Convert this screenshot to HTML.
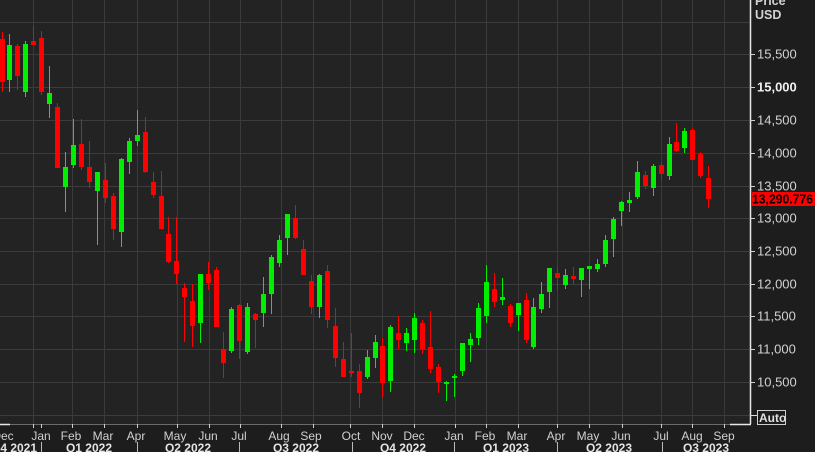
<!DOCTYPE html>
<html><head><meta charset="utf-8"><style>
html,body{margin:0;padding:0;background:#1d1d1d;width:815px;height:452px;overflow:hidden}
svg{display:block;font-family:"Liberation Sans",sans-serif}
</style></head><body>
<svg id="s" width="815" height="452" xmlns="http://www.w3.org/2000/svg">
<rect x="0" y="0" width="815" height="452" fill="#1d1d1d"/>
<rect x="0" y="0" width="750" height="424" fill="#232323"/>
<g id="grid" stroke="#3b3b3b" stroke-width="1"></g>
<g id="candles"></g>
<line x1="750.5" y1="0" x2="750.5" y2="424" stroke="#e8e8e8" stroke-width="1.5"/>
<line x1="0" y1="424.5" x2="750" y2="424.5" stroke="#6a6a6a" stroke-width="1"/>
<line x1="0" y1="424.5" x2="10" y2="424.5" stroke="#e8e8e8" stroke-width="1.5"/>
<line x1="730" y1="424.5" x2="751" y2="424.5" stroke="#e8e8e8" stroke-width="1.5"/>
<g id="ticks" stroke="#cfcfcf" stroke-width="1"></g>
<g fill="#d2d2d2" font-size="13">
<text x="755" y="5" font-weight="bold" font-size="12.5">Price</text>
<text x="755" y="19" font-weight="bold" font-size="12.5">USD</text>
<text x="757" y="58.5">15,500</text>
<text x="757" y="91.5" font-weight="bold" fill="#f0f0f0">15,000</text>
<text x="757" y="124.5">14,500</text>
<text x="757" y="157.5">14,000</text>
<text x="757" y="190.5">13,500</text>
<text x="757" y="222.5">13,000</text>
<text x="757" y="255.5">12,500</text>
<text x="757" y="288.5">12,000</text>
<text x="757" y="320.5">11,500</text>
<text x="757" y="353.5">11,000</text>
<text x="757" y="386.5">10,500</text>
</g>
<rect x="751" y="192" width="64" height="14" fill="#ff0000"/>
<text x="752" y="203.5" font-size="12.5" font-weight="bold" fill="#000" textLength="61" lengthAdjust="spacingAndGlyphs">13,290.776</text>
<line x1="750" y1="415.5" x2="757" y2="415.5" stroke="#ddd"/>
<rect x="757.5" y="410.5" width="28" height="14" fill="#1d1d1d" stroke="#cfcfcf"/>
<text x="759" y="422" font-size="12" font-weight="bold" fill="#e0e0e0">Auto</text>
<g fill="#d0d0d0" font-size="12" text-anchor="middle">
<text x="3" y="440">Dec</text><text x="41" y="440">Jan</text><text x="71" y="440">Feb</text><text x="103" y="440">Mar</text><text x="136" y="440">Apr</text><text x="175" y="440">May</text><text x="208" y="440">Jun</text><text x="239" y="440">Jul</text><text x="279" y="440">Aug</text><text x="311" y="440">Sep</text><text x="351" y="440">Oct</text><text x="382" y="440">Nov</text><text x="414" y="440">Dec</text><text x="454" y="440">Jan</text><text x="485" y="440">Feb</text><text x="517" y="440">Mar</text><text x="556" y="440">Apr</text><text x="588" y="440">May</text><text x="621" y="440">Jun</text><text x="661" y="440">Jul</text><text x="692" y="440">Aug</text><text x="724" y="440">Sep</text>
</g>
<g fill="#e4e4e4" font-size="12" font-weight="bold" text-anchor="middle">
<text x="14" y="452">Q4 2021</text><text x="89" y="452">Q1 2022</text><text x="188" y="452">Q2 2022</text><text x="296" y="452">Q3 2022</text><text x="403" y="452">Q4 2022</text><text x="506" y="452">Q1 2023</text><text x="609" y="452">Q2 2023</text><text x="706" y="452">Q3 2023</text>
</g>
<g stroke="#bbbbbb" stroke-width="1">
<line x1="41.5" y1="442" x2="41.5" y2="452"/><line x1="137.5" y1="442" x2="137.5" y2="452"/><line x1="239.5" y1="442" x2="239.5" y2="452"/><line x1="352.5" y1="442" x2="352.5" y2="452"/><line x1="454.5" y1="442" x2="454.5" y2="452"/><line x1="557.5" y1="442" x2="557.5" y2="452"/><line x1="662.5" y1="442" x2="662.5" y2="452"/>
</g>
</svg>
<script>
var NS="http://www.w3.org/2000/svg";
function el(p,t,a){var e=document.createElementNS(NS,t);for(var k in a)e.setAttribute(k,a[k]);p.appendChild(e);return e;}
var g=document.getElementById('grid');
[22,54,87,120,153,186,218,251,284,316,349,382,415].forEach(function(y){el(g,'line',{x1:0,y1:y+.5,x2:750,y2:y+.5});});
var vx=[33,72,104,137,177,209,240,281,313,350,382,414,455,486,518,557,589,622,661,692,724];
vx.forEach(function(x){el(g,'line',{x1:x+.5,y1:0,x2:x+.5,y2:424});});
var tk=document.getElementById('ticks');
vx.concat([41]).forEach(function(x){el(tk,'line',{x1:x+.5,y1:424,x2:x+.5,y2:428});});
[54,87,120,153,186,218,251,284,316,349,382].forEach(function(y){el(tk,'line',{x1:750,y1:y+.5,x2:755,y2:y+.5});});
var C=[
[2,39,82,32,92,0],[9,45,80,34,92,1],[17,46,76,44,90,0],[25,44,92,41,97,1],[33,41,45,26,45,0],[41,38,92,31,95,0],
[49,93,104,66,118,1],[57,107,168,103,168,0],[65,167,187,152,212,1],[73,145,165,119,168,1],[81,144,167,119,170,0],
[89,167,182,141,188,0],[97,172,191,172,245,1],[105,180,198,163,203,0],[113,196,229,193,240,0],[121,159,232,158,247,1],
[129,141,162,138,174,1],[137,135,141,110,146,1],[145,132,172,117,173,0],[153,182,195,172,198,0],[161,196,229,171,229,0],
[168,234,262,217,263,0],[176,261,274,217,284,0],[184,288,297,283,342,0],[192,301,326,284,347,0],[200,274,323,274,343,1],
[208,274,283,262,290,0],[216,270,327,267,327,0],[223,349,363,332,378,0],[231,309,351,307,353,1],[239,305,341,304,359,0],
[247,307,352,303,354,1],[255,314,320,313,348,0],[263,294,313,277,327,1],[271,257,294,255,314,1],[279,240,263,235,267,1],
[287,214,238,214,255,1],[295,218,238,205,239,0],[303,249,275,240,275,0],[311,281,307,275,314,0],[319,275,307,274,318,1],
[327,271,320,265,328,0],[335,326,358,308,367,0],[343,359,377,342,377,0],[351,371,372,333,377,0],[359,371,393,364,408,0],
[367,357,377,350,379,1],[375,342,358,335,368,1],[382,346,383,338,398,0],[390,327,381,325,392,1],[398,333,340,316,349,0],
[406,333,343,328,351,1],[414,318,340,313,353,1],[422,323,349,320,354,0],[430,347,369,311,373,0],[438,367,382,364,393,0],
[446,382,384,381,401,1],[454,376,378,374,397,1],[462,343,371,343,376,1],[470,339,345,333,362,1],[478,308,338,303,345,1],
[486,282,316,265,323,1],[494,289,302,273,307,0],[502,297,300,278,305,1],[510,306,323,304,327,0],[518,303,315,303,331,1],
[526,300,340,293,343,0],[533,307,347,298,349,1],[541,294,309,282,313,1],[549,268,292,268,308,1],[557,273,278,267,290,0],
[565,275,285,269,289,1],[573,276,279,267,285,0],[581,268,280,268,297,1],[589,266,269,266,289,1],[597,264,269,259,272,1],
[605,240,264,235,267,1],[613,219,239,217,257,1],[621,202,211,201,226,1],[629,200,203,192,212,1],[637,172,197,161,199,1],
[645,175,186,171,189,0],[653,166,188,164,196,1],[661,165,174,162,180,0],[669,144,176,137,180,1],[676,142,151,123,152,0],
[684,131,148,128,153,1],[692,130,160,128,160,0],[700,154,176,152,178,0],[708,178,199,166,208,0]];
var cg=document.getElementById('candles');
C.forEach(function(c){var col=c[5]?'#00ee00':'#ff0000';
el(cg,'rect',{x:c[0],y:c[3],width:1,height:Math.max(1,c[4]-c[3]),fill:col});
el(cg,'rect',{x:c[0]-2,y:c[1],width:5,height:Math.max(2,c[2]-c[1]),fill:col});});
</script>
</body></html>
